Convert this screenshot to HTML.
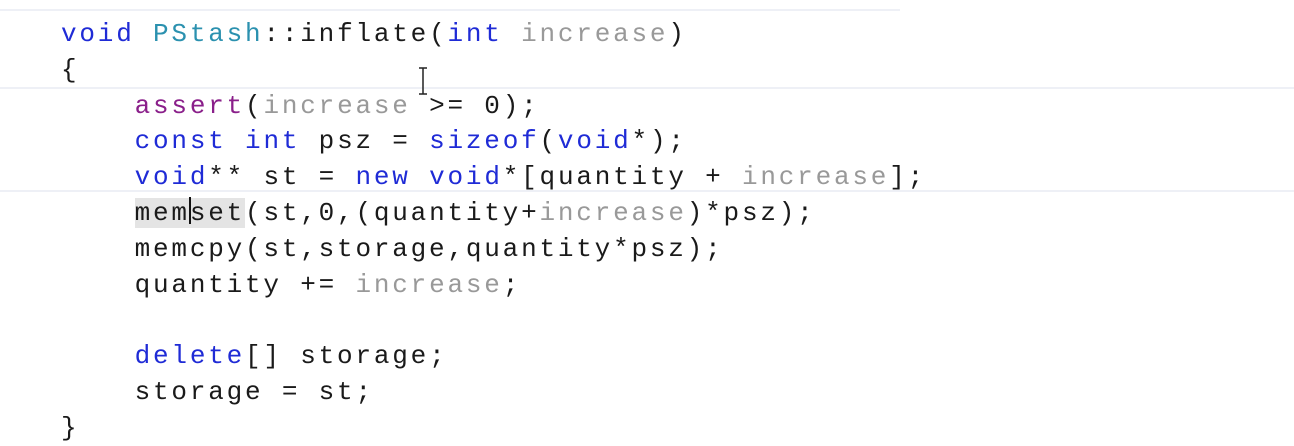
<!DOCTYPE html>
<html><head><meta charset="utf-8"><style>
html,body{margin:0;padding:0;background:#fff;width:1294px;height:446px;overflow:hidden;position:relative}
.code{position:absolute;left:61px;top:17px;font-family:"Liberation Mono",monospace;font-size:26px;letter-spacing:2.8px;line-height:35.8px;color:#1a1a1a;white-space:pre}
.k{color:#1f2bd6}.t{color:#2b91af}.p{color:#999}.m{color:#8a1f8a}
.hl{background:#e4e4e4}
.ln{position:absolute;height:2px;background:#eef0f6}
</style></head><body>
<div class="ln" style="left:0;top:9px;width:900px"></div>
<div class="ln" style="left:0;top:87px;width:1294px"></div>
<div class="ln" style="left:0;top:190px;width:1294px"></div>
<div class="code"><span class="k">void</span> <span class="t">PStash</span>::inflate(<span class="k">int</span> <span class="p">increase</span>)
{
    <span class="m">assert</span>(<span class="p">increase</span> &gt;= 0);
    <span class="k">const</span> <span class="k">int</span> psz = <span class="k">sizeof</span>(<span class="k">void</span>*);
    <span class="k">void</span>** st = <span class="k">new</span> <span class="k">void</span>*[quantity + <span class="p">increase</span>];
    <span class="hl">memset</span>(st,0,(quantity+<span class="p">increase</span>)*psz);
    memcpy(st,storage,quantity*psz);
    quantity += <span class="p">increase</span>;

    <span class="k">delete</span>[] storage;
    storage = st;
}</div>
<svg style="position:absolute;left:0;top:0" width="1294" height="446"><path d="M419 68h8M423 68v26M419 94h8" stroke="#222" stroke-width="1.5" fill="none"/><path d="M190 197v27" stroke="#111" stroke-width="2"/></svg>
</body></html>
